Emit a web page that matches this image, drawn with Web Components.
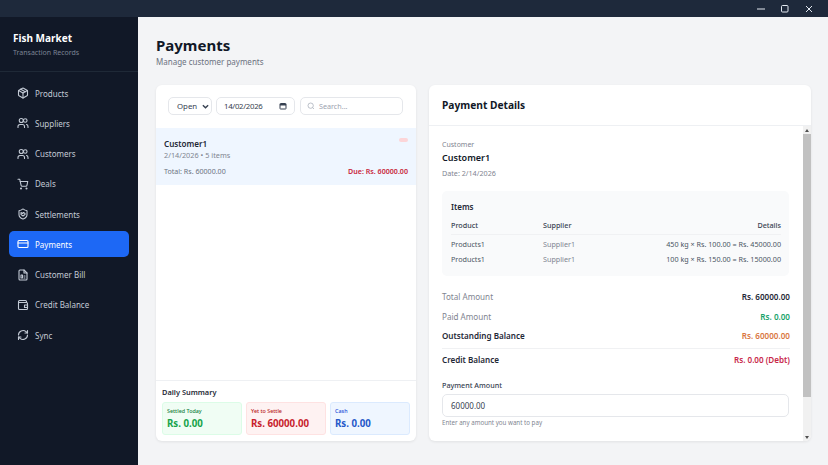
<!DOCTYPE html>
<html>
<head>
<meta charset="utf-8">
<style>
  html, body { margin: 0; height: 100%; overflow: hidden; font-family: "Noto Sans", "Open Sans", sans-serif; }
</style>
</head>
<body>
<app-shell>
  <title-bar></title-bar>
  <div slot="side">
    <side-bar>
      <nav-item icon="box">Products</nav-item>
      <nav-item icon="users">Suppliers</nav-item>
      <nav-item icon="users">Customers</nav-item>
      <nav-item icon="cart">Deals</nav-item>
      <nav-item icon="shield">Settlements</nav-item>
      <nav-item icon="card" active>Payments</nav-item>
      <nav-item icon="file">Customer Bill</nav-item>
      <nav-item icon="wallet">Credit Balance</nav-item>
      <nav-item icon="sync">Sync</nav-item>
    </side-bar>
  </div>
  <payments-page slot="main"></payments-page>
</app-shell>

<script>
const ICONS = {
  box: '<path d="M21 8a2 2 0 0 0-1-1.700l-7-4a2 2 0 0 0-2 0l-7 4A2 2 0 0 0 3 8v8a2 2 0 0 0 1 1.700l7 4a2 2 0 0 0 2 0l7-4a2 2 0 0 0 1-1.700z"/><path d="M3.300 7 12 12l8.700-5"/><path d="M12 22V12"/><path d="m7.500 4.300 9 5.200"/>',
  users: '<path d="M15 21v-2a4 4 0 0 0-4-4H6a4 4 0 0 0-4 4v2"/><circle cx="8.500" cy="7" r="4"/><path d="M22 21v-2a4 4 0 0 0-3-3.900"/><circle cx="16.500" cy="7" r="3.600"/>',
  cart: '<circle cx="8" cy="21" r="1"/><circle cx="19" cy="21" r="1"/><path d="M2 2.500h3.500l2.700 12.400a2 2 0 0 0 2 1.600h7.700a2 2 0 0 0 2-1.600L21.500 7H6"/>',
  shield: '<path d="M20 13c0 5-3.500 7.500-7.700 9a1 1 0 0 1-.6 0C7.500 20.500 4 18 4 13V6a1 1 0 0 1 1-1c2 0 4.500-1.200 6.200-2.700a1.200 1.200 0 0 1 1.600 0C14.500 3.800 17 5 19 5a1 1 0 0 1 1 1z"/><path d="m8 9 3 2 2-2 3 2v2l-4 3-4-3z"/>',
  card: '<rect x="2" y="5" width="20" height="14" rx="2"/><path d="M2 10h20"/>',
  file: '<path d="M14 2H6a2 2 0 0 0-2 2v16a2 2 0 0 0 2 2h12a2 2 0 0 0 2-2V8z"/><path d="M14 2v6h6"/><path d="M8 12h3v6H8z"/><path d="M14 14h2M14 18h2"/>',
  wallet: '<path d="M19 7V5a2 2 0 0 0-2-2H5a2 2 0 0 0-2 2v14a2 2 0 0 0 2 2h14a2 2 0 0 0 2-2V9a2 2 0 0 0-2-2H3"/><path d="M15 12h6v5h-6z"/>',
  sync: '<path d="M3 12a9 9 0 0 1 15-6.700L21 8"/><path d="M21 3v5h-5"/><path d="M21 12a9 9 0 0 1-15 6.700L3 16"/><path d="M8 16H3v5"/>'
};

class AppShell extends HTMLElement {
  constructor() {
    super();
    this.attachShadow({ mode: 'open' });
    this.shadowRoot.innerHTML = `
      <style>
        :host { display: flex; flex-direction: column; height: 100vh; }
        .row { flex: 1; display: flex; min-height: 0; }
        .side { width: 138px; flex: none; display: flex; }
        .main { flex: 1; min-width: 0; display: flex; }
      </style>
      <slot></slot>
      <div class="row">
        <div class="side"><slot name="side"></slot></div>
        <div class="main"><slot name="main"></slot></div>
      </div>`;
  }
}

class TitleBar extends HTMLElement {
  constructor() {
    super();
    this.attachShadow({ mode: 'open' });
    this.shadowRoot.innerHTML = `
      <style>
        :host { display: flex; justify-content: flex-end; height: 17px; background: #1e293b; color: #e2e8f0; }
        span { width: 24px; display: flex; align-items: center; justify-content: center; }
        .end { margin-right: 7px; }
        svg { width: 8px; height: 8px; fill: none; stroke: currentColor; stroke-width: 1; }
      </style>
      <span><svg viewBox="0 0 8 8"><path d="M0 4h8"/></svg></span>
      <span><svg viewBox="0 0 8 8"><rect x=".5" y=".5" width="6.500" height="6.500" rx="1"/></svg></span>
      <span class="end"><svg viewBox="0 0 8 8"><path d="M1 1l6 6M7 1l-6 6"/></svg></span>`;
  }
}

class SideBar extends HTMLElement {
  constructor() {
    super();
    this.attachShadow({ mode: 'open' });
    this.shadowRoot.innerHTML = `
      <style>
        :host { display: flex; flex-direction: column; width: 138px; height: 100%; background: #111827; }
        header { height: 55px; box-sizing: border-box; padding: 14px 13px 0; border-bottom: 1px solid #1f2937; }
        h1 { margin: 0; font-size: 10px; line-height: 15px; font-weight: 700; color: #fff; }
        p { margin: 0; font-size: 7px; line-height: 13px; color: #7b8494; }
        nav { display: flex; flex-direction: column; padding: 8px 9px; gap: 4.250px; }
      </style>
      <header><h1>Fish Market</h1><p>Transaction Records</p></header>
      <nav><slot></slot></nav>`;
  }
}

class NavItem extends HTMLElement {
  constructor() {
    super();
    this.attachShadow({ mode: 'open' });
  }
  connectedCallback() {
    const active = this.hasAttribute('active');
    this.shadowRoot.innerHTML = `
      <style>
        :host { display: flex; align-items: center; gap: 6px; height: 26px; padding: 0 8px; border-radius: 5px;
          font-size: 8px; color: ${active ? '#fff' : '#c3cad5'}; background: ${active ? '#1d68f5' : 'transparent'}; }
        svg { width: 12px; height: 12px; flex: none; fill: none; stroke: currentColor; stroke-width: 2.200; stroke-linecap: round; stroke-linejoin: round; }
      </style>
      <svg viewBox="0 0 24 24">${ICONS[this.getAttribute('icon')]}</svg><slot></slot>`;
  }
}

class FilterBar extends HTMLElement {
  constructor() {
    super();
    this.attachShadow({ mode: 'open' });
    this.shadowRoot.innerHTML = `
      <style>
        :host { display: flex; gap: 4px; padding: 12px 13px 13px 12px; font-size: 7.800px; color: #374151; }
        .ctl { height: 18px; box-sizing: border-box; border: 1px solid #e5e7eb; border-radius: 5px; background: #fff; display: flex; align-items: center; }
        .sel { width: 44px; padding: 0 2px 0 8px; justify-content: space-between; }
        .date { width: 79px; padding: 0 7px 0 7px; justify-content: space-between; letter-spacing: -.3px; }
        .search { width: 103px; margin-left: 1px; padding: 0 6px; gap: 4px; color: #9ca3af; font-size: 7.200px; }
        svg { flex: none; fill: none; stroke: currentColor; }
      </style>
      <div class="ctl sel"><span>Open</span><svg width="7" height="7" viewBox="0 0 8 8" stroke-width="1.600"><path d="M1 2.500l3 3 3-3"/></svg></div>
      <div class="ctl date"><span>14/02/2026</span><svg width="8" height="8" viewBox="0 0 8 8" stroke-width="1"><rect x="1" y="1.500" width="6" height="5.500" rx=".5"/><path d="M1 2.800h6" stroke-width="1.600"/></svg></div>
      <div class="ctl search"><svg width="8" height="8" viewBox="0 0 24 24" stroke-width="2"><circle cx="11" cy="11" r="8"/><path d="m21 21-4.300-4.300"/></svg><span>Search...</span></div>`;
  }
}

class CustomerRow extends HTMLElement {
  constructor() {
    super();
    this.attachShadow({ mode: 'open' });
    this.shadowRoot.innerHTML = `
      <style>
        :host { display: block; position: relative; height: 57px; box-sizing: border-box; padding: 9px 8px 0 8px; background: #eff6ff; }
        .name { font-size: 8.100px; line-height: 13px; font-weight: 600; color: #1f2937; }
        .sub { font-size: 7.300px; line-height: 11px; color: #7f8591; }
        .foot { display: flex; justify-content: space-between; margin-top: 4px; font-size: 7.100px; line-height: 12px; color: #6b7280; }
        b { color: #c81e3a; font-weight: 600; }
        .tag { position: absolute; top: 10px; right: 8px; width: 9px; height: 4px; border-radius: 2px; background: #fcd5d8; }
      </style>
      <div class="name">Customer1</div>
      <div class="sub">2/14/2026 • 5 items</div>
      <div class="foot"><span>Total: Rs. 60000.00</span><b>Due: Rs. 60000.00</b></div>
      <span class="tag"></span>`;
  }
}

class StatBox extends HTMLElement {
  constructor() {
    super();
    this.attachShadow({ mode: 'open' });
  }
  connectedCallback() {
    const tone = this.getAttribute('tone');
    const c = { green: ['#f0fdf4', '#dcfce7', '#15803d', '#16a34a'], red: ['#fef2f2', '#fee2e2', '#b91c1c', '#c81e2e'], blue: ['#eff6ff', '#dbeafe', '#1d4ed8', '#2558c9'] }[tone];
    this.shadowRoot.innerHTML = `
      <style>
        :host { display: block; flex: 1; height: 33px; box-sizing: border-box; padding: 4px 4px 0; border-radius: 3px;
          background: ${c[0]}; border: 1px solid ${c[1]}; }
        .l { font-size: 5.400px; line-height: 9px; font-weight: 500; color: ${c[2]}; }
        .v { font-size: 9.700px; line-height: 14px; margin-top: 1px; font-weight: 700; color: ${c[3]}; white-space: nowrap; }
      </style>
      <div class="l">${this.getAttribute('label')}</div><div class="v">${this.getAttribute('value')}</div>`;
  }
}

class DailySummary extends HTMLElement {
  constructor() {
    super();
    this.attachShadow({ mode: 'open' });
    this.shadowRoot.innerHTML = `
      <style>
        :host { display: block; border-top: 1px solid #eef0f3; padding: 4px 6px 6px; }
        h3 { margin: 0 0 2px; font-size: 7.400px; line-height: 15px; font-weight: 600; color: #1f2937; }
        .row { display: flex; gap: 4px; }
      </style>
      <h3>Daily Summary</h3>
      <div class="row">
        <stat-box tone="green" label="Settled Today" value="Rs. 0.00"></stat-box>
        <stat-box tone="red" label="Yet to Settle" value="Rs. 60000.00"></stat-box>
        <stat-box tone="blue" label="Cash" value="Rs. 0.00"></stat-box>
      </div>`;
  }
}

class AmountRow extends HTMLElement {
  constructor() {
    super();
    this.attachShadow({ mode: 'open' });
  }
  connectedCallback() {
    const strong = this.hasAttribute('strong');
    this.shadowRoot.innerHTML = `
      <style>
        :host { display: flex; justify-content: space-between; align-items: center; height: 19.500px; font-size: 8.100px; }
        .k { color: ${strong ? '#1f2937' : '#7f8591'}; font-weight: ${strong ? 600 : 400}; }
        .v { font-weight: 600; color: ${this.getAttribute('color') || '#1f2937'}; }
      </style>
      <span class="k">${this.getAttribute('label')}</span><span class="v">${this.getAttribute('value')}</span>`;
  }
}

class ScrollRail extends HTMLElement {
  constructor() {
    super();
    this.attachShadow({ mode: 'open' });
    this.shadowRoot.innerHTML = `
      <style>
        :host { display: flex; flex-direction: column; width: 8px; flex: none; background: #f1f1f1; }
        .btn { height: 8px; display: flex; align-items: center; justify-content: center; }
        .thumb { height: 263px; background: #c1c1c1; }
        .end { margin-top: auto; }
        svg { width: 4px; height: 3px; fill: #505050; }
      </style>
      <div class="btn"><svg viewBox="0 0 4 3"><path d="M2 0l2 3H0z"/></svg></div>
      <div class="thumb"></div>
      <div class="btn end"><svg viewBox="0 0 4 3"><path d="M0 0h4L2 3z"/></svg></div>`;
  }
}

class PaymentDetails extends HTMLElement {
  constructor() {
    super();
    this.attachShadow({ mode: 'open' });
    this.shadowRoot.innerHTML = `
      <style>
        :host { display: flex; flex-direction: column; flex: 1; min-width: 0; background: #fff; border-radius: 6px; box-shadow: 0 1px 3px rgba(0,0,0,.08); overflow: hidden; }
        header { height: 41px; flex: none; box-sizing: border-box; padding: 0 13px; display: flex; align-items: center; border-bottom: 1px solid #eef0f3;
          font-size: 10.200px; font-weight: 700; color: #111827; }
        .wrap { flex: 1; min-height: 0; display: flex; }
        .body { flex: 1; min-width: 0; overflow: hidden; padding: 13px 13px 0 13px; }
        .cap { font-size: 7px; line-height: 12px; color: #7f8591; }
        .cust { font-size: 9px; line-height: 14px; font-weight: 600; color: #111827; }
        .date { font-size: 7.200px; line-height: 17px; color: #7f8591; }
        .items { margin: 9px 1px 11px 0; padding: 9px 8px 10px 9px; background: #f9fafb; border-radius: 5px; }
        h4 { margin: 0 0 2px; font-size: 8px; line-height: 13px; font-weight: 600; color: #1f2937; }
        table { width: 100%; border-collapse: collapse; font-size: 7.200px; }
        th { font-weight: 500; color: #374151; text-align: left; height: 19px; border-bottom: 1px solid #f0f1f3; padding: 0; }
        td { height: 15px; padding: 0; color: #4b5563; }
        tr:first-child td { padding-top: 1px; }
        td.s { color: #7f8591; }
        .r { text-align: right; }
        .c1 { width: 92px; }
        hr { border: 0; border-top: 1px solid #f0f1f3; margin: 2.500px 0 1px; }
        label { display: block; margin-top: 9.250px; font-size: 7.200px; line-height: 12px; font-weight: 500; color: #374151; }
        .input { margin: 3px 1px 0 0; height: 23px; box-sizing: border-box; border: 1px solid #e5e7eb; border-radius: 5px; padding: 0 8px; display: flex; align-items: center; font-size: 8px; color: #374151; }
        small { display: block; margin-top: 1.500px; font-size: 6.200px; line-height: 10px; color: #7f8591; }
      </style>
      <header>Payment Details</header>
      <div class="wrap">
        <div class="body">
          <div class="cap">Customer</div>
          <div class="cust">Customer1</div>
          <div class="date">Date: 2/14/2026</div>
          <div class="items">
            <h4>Items</h4>
            <table>
              <thead><tr><th class="c1">Product</th><th>Supplier</th><th class="r">Details</th></tr></thead>
              <tbody>
                <tr><td>Products1</td><td class="s">Supplier1</td><td class="r">450 kg × Rs. 100.00 = Rs. 45000.00</td></tr>
                <tr><td>Products1</td><td class="s">Supplier1</td><td class="r">100 kg × Rs. 150.00 = Rs. 15000.00</td></tr>
              </tbody>
            </table>
          </div>
          <amount-row label="Total Amount" value="Rs. 60000.00"></amount-row>
          <amount-row label="Paid Amount" value="Rs. 0.00" color="#16a36a"></amount-row>
          <amount-row strong label="Outstanding Balance" value="Rs. 60000.00" color="#d9773f"></amount-row>
          <hr>
          <amount-row strong label="Credit Balance" value="Rs. 0.00 (Debt)" color="#c8284a"></amount-row>
          <label>Payment Amount</label>
          <div class="input">60000.00</div>
          <small>Enter any amount you want to pay</small>
        </div>
        <scroll-rail></scroll-rail>
      </div>`;
  }
}

class PaymentsPage extends HTMLElement {
  constructor() {
    super();
    this.attachShadow({ mode: 'open' });
    this.shadowRoot.innerHTML = `
      <style>
        :host { display: flex; flex-direction: column; flex: 1; min-width: 0; box-sizing: border-box; padding: 18px 17px 24px 18px; background: #f3f4f6; }
        h2 { margin: 0; font-size: 15px; line-height: 20.500px; font-weight: 700; color: #111827; }
        .sub { font-size: 8px; line-height: 11px; color: #6b7280; margin-bottom: 18.500px; }
        .cols { flex: 1; display: flex; gap: 13px; min-height: 0; }
        .list { width: 260px; flex: none; display: flex; flex-direction: column; background: #fff; border-radius: 6px; box-shadow: 0 1px 3px rgba(0,0,0,.08); overflow: hidden; }
        .grow { flex: 1; }
      </style>
      <h2>Payments</h2>
      <div class="sub">Manage customer payments</div>
      <div class="cols">
        <section class="list">
          <filter-bar></filter-bar>
          <customer-row></customer-row>
          <div class="grow"></div>
          <daily-summary></daily-summary>
        </section>
        <payment-details></payment-details>
      </div>`;
  }
}

customElements.define('app-shell', AppShell);
customElements.define('title-bar', TitleBar);
customElements.define('side-bar', SideBar);
customElements.define('nav-item', NavItem);
customElements.define('filter-bar', FilterBar);
customElements.define('customer-row', CustomerRow);
customElements.define('stat-box', StatBox);
customElements.define('daily-summary', DailySummary);
customElements.define('amount-row', AmountRow);
customElements.define('scroll-rail', ScrollRail);
customElements.define('payment-details', PaymentDetails);
customElements.define('payments-page', PaymentsPage);
</script>
</body>
</html>
